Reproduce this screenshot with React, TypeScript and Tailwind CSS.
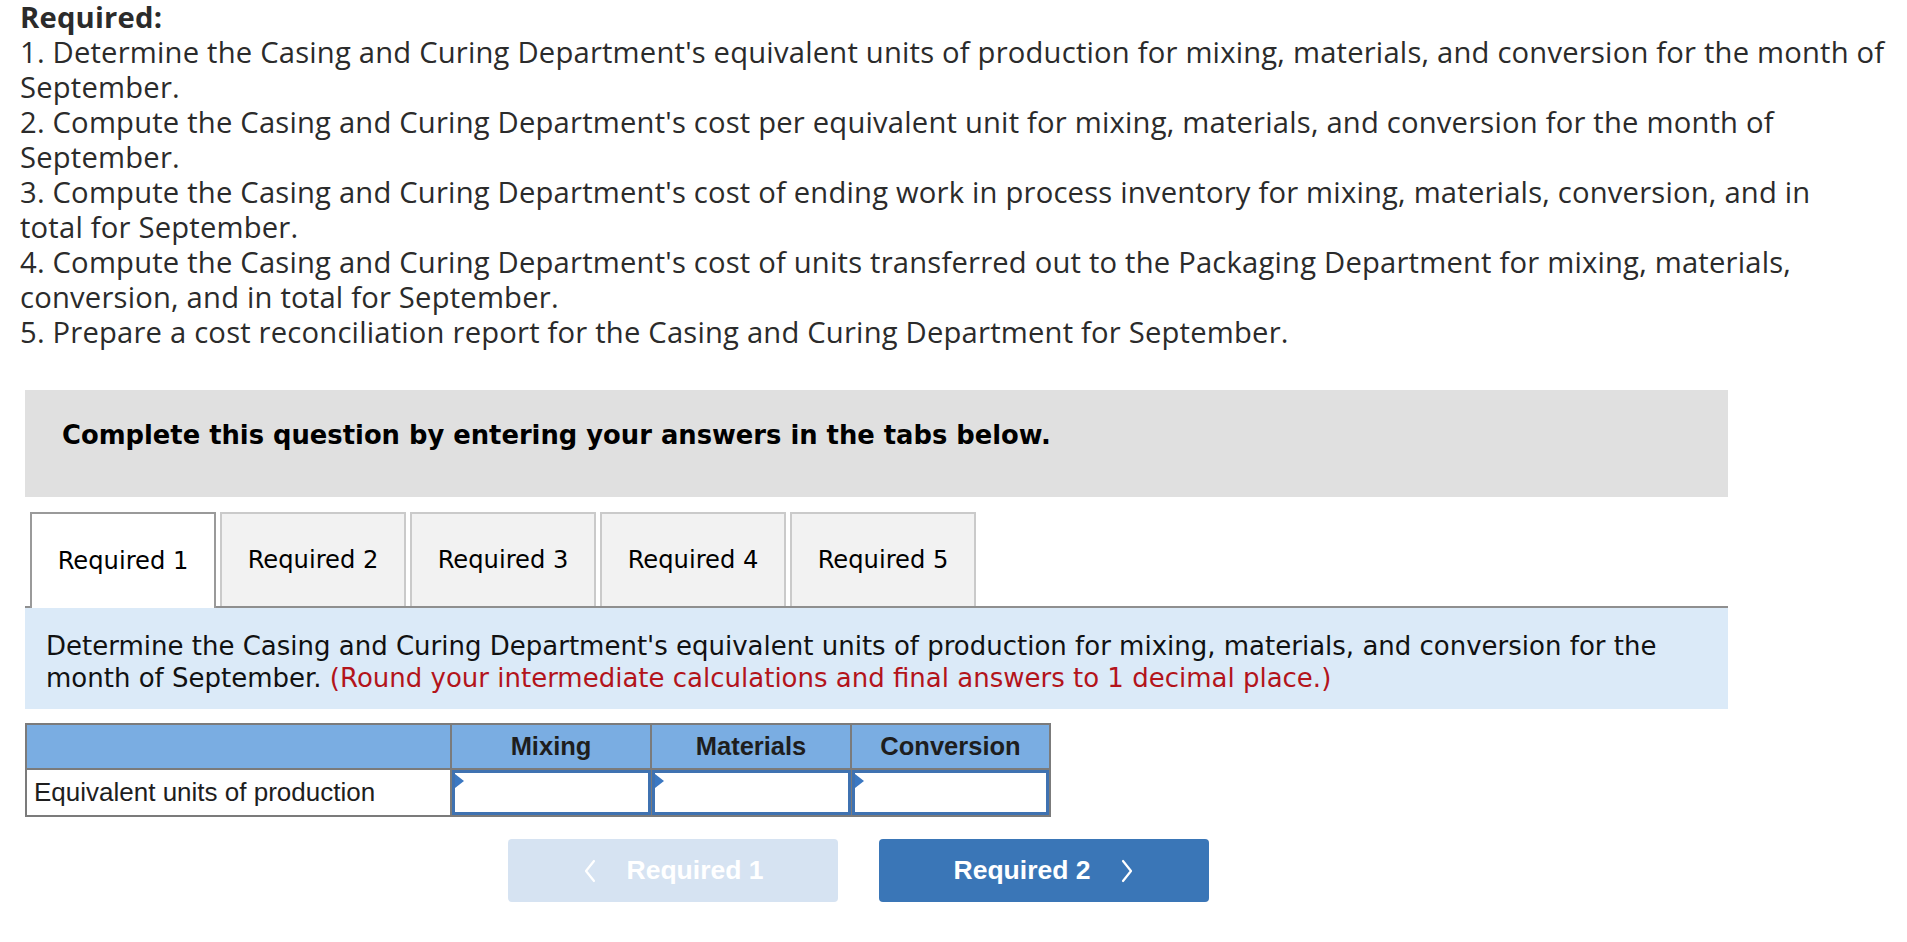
import React from "react";

const mainFont = { fontFamily: '"Open Sans", "Liberation Sans", sans-serif' };

function Triangle() {
  return (
    <svg className="absolute left-0 top-[1px]" width="9" height="14" viewBox="0 0 9 14">
      <polygon points="0,0 9,7 0,14" fill="#3b78c2" />
    </svg>
  );
}

function InputCell() {
  return (
    <td className="border border-[#7b7b7b] p-0 h-[47px]">
      <div className="relative h-[45px] border-[3px] border-[#3f72b1] bg-white">
        <Triangle />
      </div>
    </td>
  );
}

function ChevronLeft() {
  return (
    <svg width="14" height="26" viewBox="0 0 14 26" fill="none">
      <polyline points="11,3 3,13 11,23" stroke="white" strokeWidth="2.2" strokeLinecap="round" strokeLinejoin="round" />
    </svg>
  );
}

function ChevronRight() {
  return (
    <svg width="14" height="26" viewBox="0 0 14 26" fill="none">
      <polyline points="3,3 11,13 3,23" stroke="white" strokeWidth="2.2" strokeLinecap="round" strokeLinejoin="round" />
    </svg>
  );
}

function Item({ lines }: { lines: string[] }) {
  return (
    <div>
      {lines.map((l) => (
        <div key={l} className="whitespace-nowrap">
          {l}
        </div>
      ))}
    </div>
  );
}

export default function App() {
  const tabs = ["Required 1", "Required 2", "Required 3", "Required 4", "Required 5"];
  return (
    <div className="w-[1907px] min-h-[942px] bg-white text-[#222]">
      <div
        className="pl-[20px] w-[1892px] text-[29.2px] tracking-[0.2px] leading-[35px] text-[#2b2b2b]"
        style={mainFont}
      >
        <div className="font-bold">Required:</div>
        <Item
          lines={[
            "1. Determine the Casing and Curing Department's equivalent units of production for mixing, materials, and conversion for the month of",
            "September.",
          ]}
        />
        <Item
          lines={[
            "2. Compute the Casing and Curing Department's cost per equivalent unit for mixing, materials, and conversion for the month of",
            "September.",
          ]}
        />
        <Item
          lines={[
            "3. Compute the Casing and Curing Department's cost of ending work in process inventory for mixing, materials, conversion, and in",
            "total for September.",
          ]}
        />
        <Item
          lines={[
            "4. Compute the Casing and Curing Department's cost of units transferred out to the Packaging Department for mixing, materials,",
            "conversion, and in total for September.",
          ]}
        />
        <Item lines={["5. Prepare a cost reconciliation report for the Casing and Curing Department for September."]} />
      </div>

      <div className="ml-[25px] w-[1703px] mt-[40px]" style={{ fontFamily: '"DejaVu Sans", Verdana, sans-serif' }}>
        <div className="h-[107px] bg-[#e0e0e0] pl-[37px] pt-[29px]">
          <div className="text-[25.8px] leading-[32px] font-bold text-black">
            Complete this question by entering your answers in the tabs below.
          </div>
        </div>

        <div className="mt-[15px] flex items-end gap-[4px] pl-[5px] border-b-2 border-[#8f8f8f] h-[96px]">
          {tabs.map((t, i) => (
            <div
              key={t}
              className={
                i === 0
                  ? "w-[186px] h-[96px] -mb-[2px] bg-white border-2 border-b-0 border-[#9a9a9a] flex items-center justify-center text-[24.2px] text-black"
                  : "w-[186px] h-[94px] bg-[#f2f2f2] border-2 border-b-0 border-[#cacaca] flex items-center justify-center text-[24.2px] text-black"
              }
            >
              {t}
            </div>
          ))}
        </div>

        <div className="bg-[#dbeaf8] pl-[21px] pr-[30px] pt-[22px] pb-[12px] h-[101px] text-[26px] leading-[32px] text-[#111]">
          Determine the Casing and Curing Department's equivalent units of production for mixing, materials, and conversion for the month of September.{" "}
          <span className="text-[#b3141b]">(Round your intermediate calculations and final answers to 1 decimal place.)</span>
        </div>
      </div>

      <div className="ml-[25px] mt-[14px]" style={{ fontFamily: '"Liberation Sans", Arial, sans-serif' }}>
        <table className="border-collapse border-2 border-[#7b7b7b] w-[1024px] table-fixed">
          <colgroup>
            <col className="w-[425px]" />
            <col className="w-[200px]" />
            <col className="w-[200px]" />
            <col className="w-[199px]" />
          </colgroup>
          <thead>
            <tr className="bg-[#7aade2] h-[45px]">
              <th className="border-2 border-[#7b7b7b]"></th>
              <th className="border-2 border-[#7b7b7b] text-[25.5px] font-bold text-[#1e1e1e]">Mixing</th>
              <th className="border-2 border-[#7b7b7b] text-[25.5px] font-bold text-[#1e1e1e]">Materials</th>
              <th className="border-2 border-[#7b7b7b] text-[25.5px] font-bold text-[#1e1e1e]">Conversion</th>
            </tr>
          </thead>
          <tbody>
            <tr>
              <td className="border-2 border-[#7b7b7b] text-[26px] text-[#1e1e1e] pl-[7px] text-left">Equivalent units of production</td>
              <InputCell />
              <InputCell />
              <InputCell />
            </tr>
          </tbody>
        </table>

        <div className="flex mt-[22px] ml-[483px] gap-[41px]">
          <div className="w-[330px] h-[63px] rounded-[4px] bg-[#d6e3f2] flex items-center justify-center text-white text-[26.5px] font-bold">
            <span className="mr-[30px] flex"><ChevronLeft /></span>
            <span>Required 1</span>
          </div>
          <div className="w-[330px] h-[63px] rounded-[4px] bg-[#3a76b7] flex items-center justify-center text-white text-[26.5px] font-bold">
            <span>Required 2</span>
            <span className="ml-[30px] flex"><ChevronRight /></span>
          </div>
        </div>
      </div>
    </div>
  );
}
